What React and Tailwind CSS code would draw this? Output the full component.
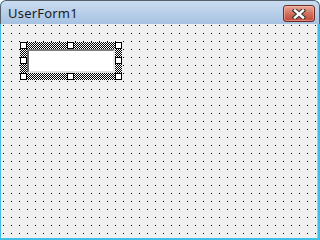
import React from 'react';

const Handle = ({ className }) => (
  <div className={`absolute w-[7px] h-[7px] bg-white border border-black ${className}`} />
);

const CloseGlyph = () => (
  <svg width="14" height="10" viewBox="0 0 14 10">
    <path d="M3 1.5 L11 8.5 M11 1.5 L3 8.5" stroke="#3a3a3a" strokeWidth="4.6" strokeLinecap="square" />
    <path d="M3 1.5 L11 8.5 M11 1.5 L3 8.5" stroke="#ffffff" strokeWidth="2.4" strokeLinecap="square" />
  </svg>
);

export default function App() {
  return (
    <div className="w-[320px] h-[240px] flex flex-col overflow-hidden rounded-t-[6px] bg-[#3fbfe7] font-['Noto_Sans',sans-serif]">
      {/* title bar */}
      <div className="h-[24px] shrink-0 flex items-center justify-between pl-[7px] pr-[4px] rounded-t-[6px] border-t border-x border-[#56606d] bg-gradient-to-b from-[#cadcf0] to-[#a6c2e1]">
        <span className="text-[13px] leading-none tracking-[0.2px] text-[#1b1b1b] pt-[1px]">UserForm1</span>
        <button className="w-[32px] h-[17px] mt-[2px] flex items-center justify-center rounded-[3px] border border-[#6b2b22] bg-gradient-to-b from-[#e9a797] via-[#d2705e] to-[#c0473a] shadow-[inset_0_0_0_1px_rgba(255,210,200,0.45)]">
          <CloseGlyph />
        </button>
      </div>

      {/* client area */}
      <div className="flex-1 ml-[1px] mr-[2px] mb-[2px] bg-[#f0f0f0] border-r border-[#b9c3cc] bg-[image:conic-gradient(from_270deg_at_1px_1px,#000_25%,transparent_0)] bg-[length:8px_8px] bg-[position:2px_1px] pt-[18px] pl-[19px]">
        <div className="relative w-[102px] h-[38px] p-[7px] bg-[image:repeating-conic-gradient(#000_0_25%,#fff_0_50%)] bg-[length:2px_2px]">
          <div className="w-full h-full bg-white border-2 border-t-[#7d7d7d] border-l-[#6a6a6a] border-b-[#dcdcdc] border-r-[#e6e6e6]" />
          <Handle className="left-0 top-0" />
          <Handle className="left-[47px] top-0" />
          <Handle className="right-0 top-0" />
          <Handle className="left-0 top-[15px]" />
          <Handle className="right-0 top-[15px]" />
          <Handle className="left-0 bottom-0" />
          <Handle className="left-[47px] bottom-0" />
          <Handle className="right-0 bottom-0" />
        </div>
      </div>
    </div>
  );
}
